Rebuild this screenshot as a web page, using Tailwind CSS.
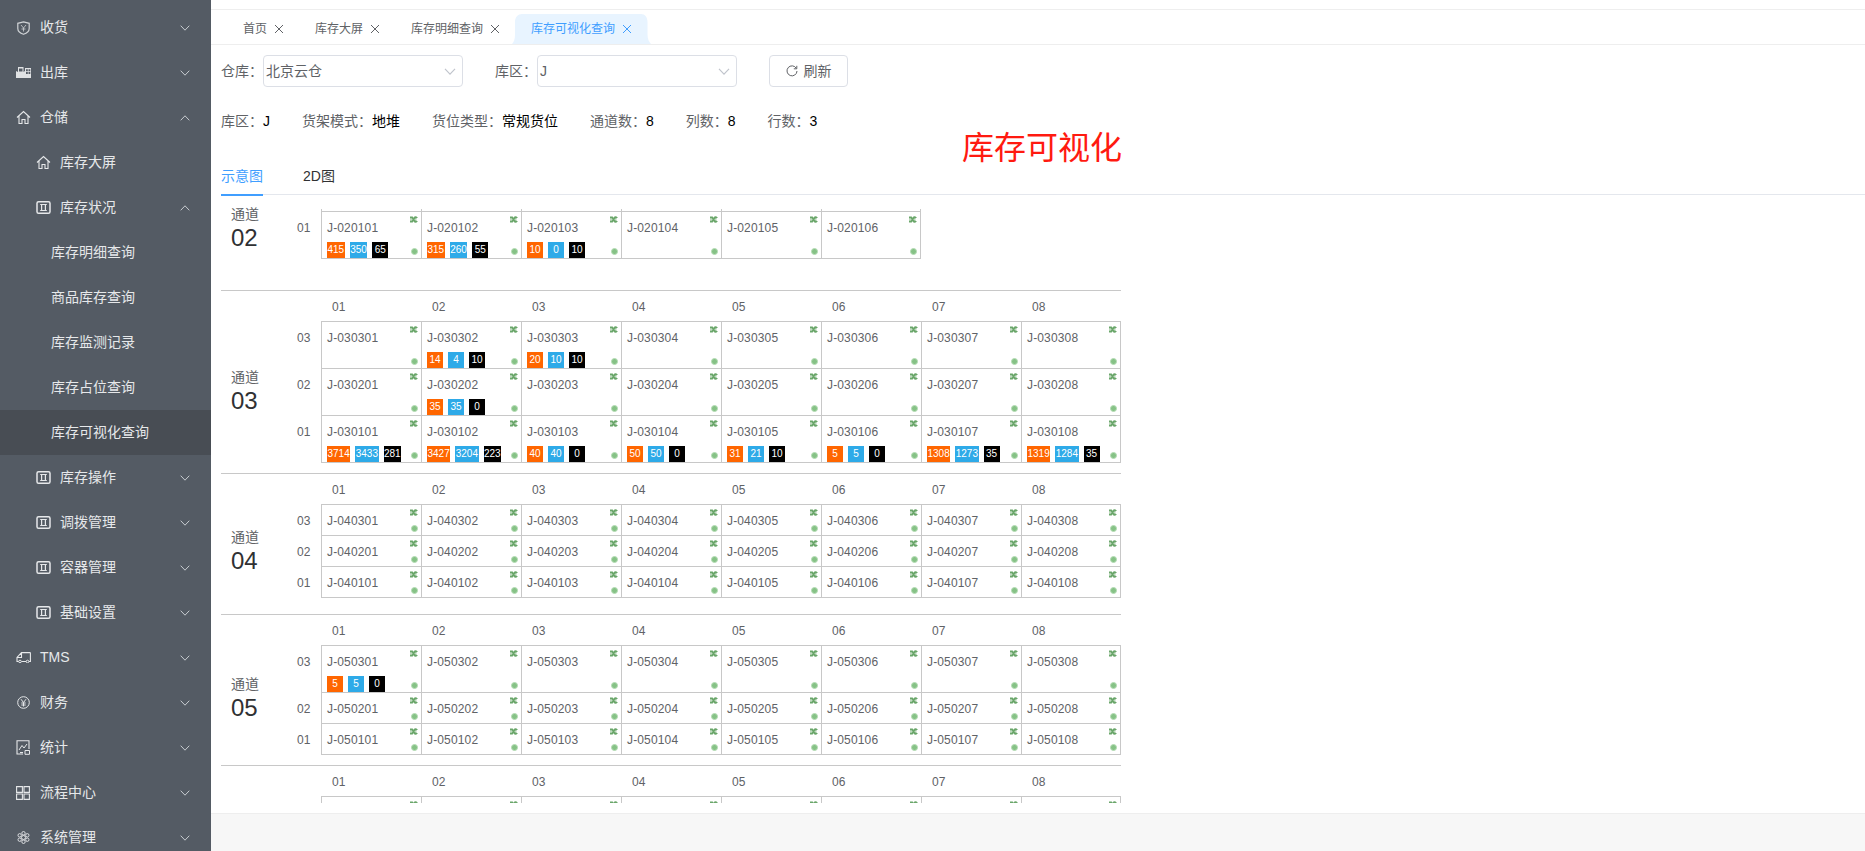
<!DOCTYPE html>
<html lang="zh-CN">
<head>
<meta charset="utf-8">
<title>库存可视化查询</title>
<script src="https://cdn.jsdelivr.net/npm/@tailwindcss/browser@4"></script>
</head>
<body class="m-0 h-[851px] w-[1865px] overflow-hidden bg-white text-[14px] text-[#606266] font-['Liberation_Sans','Noto_Sans_CJK_SC',sans-serif]">
<svg class="hidden">
  <symbol id="chev" viewBox="0 0 10 6"><path d="M.7.7 5 5.2 9.3.7" fill="none" stroke="currentColor" stroke-width="1"/></symbol>
  <symbol id="home" viewBox="0 0 15 15"><path d="M1 7.5 7.5 1.5 14 7.5M3 6v7.5h3V9.5h3v4h3V6" fill="none" stroke="currentColor" stroke-width="1.1"/></symbol>
  <symbol id="box" viewBox="0 0 15 15"><rect x="1" y="1.7" width="13" height="11.6" rx="1.6" fill="none" stroke="currentColor" stroke-width="1.5"/><path d="M5.6 4.5v6M9.4 4.5v6M4.2 4.5h6.6M4.2 10.5h6.6" fill="none" stroke="currentColor" stroke-width="1.2"/></symbol>
  <symbol id="shuffle" viewBox="0 0 8 7"><rect x="0" y="2" width="6.500" height="3" fill="#74ad74" fill-opacity=".45"/><path d="M0 1.300h2.200l2.600 4.400h1.400M0 5.700h2.200l2.600-4.400h1.400" fill="none" stroke="#6aa66a" stroke-width="1.800"/><path d="M5.500 0 8 1.400 5.500 2.800zM5.500 4.200 8 5.600 5.500 7z" fill="#6aa66a"/></symbol>
  <symbol id="close" viewBox="0 0 9 9"><path d="M.5.5l8 8M8.500.5l-8 8" fill="none" stroke="currentColor" stroke-width="1"/></symbol>
</svg>
<div class="flex h-full w-full">
  <aside class="h-full w-[211px] shrink-0 overflow-hidden bg-[#545b64] pt-[5px] text-[#e6e8ea]">
    <div class="flex h-[45px] items-center"><svg class="ml-[17px] h-[14px] w-[13px] shrink-0 text-[#d0d3d6]" viewBox="0 0 13 14"><path d="M6.500.8 12.200 2.300V7.500C12.200 10.300 9.500 12.300 6.500 13.300 3.500 12.300.8 10.300.8 7.500V2.300Z" fill="none" stroke="currentColor" stroke-width="1.200"/><path d="M4 4 6.500 7 9 4M6.500 7v3.500M4.500 8h4" fill="none" stroke="currentColor" stroke-width=".8"/></svg><span class="ml-[10px] flex-1">收货</span><svg class="mr-[21px] h-[6px] w-[10px] text-[#c8ccd0]"><use href="#chev"/></svg></div>
    <div class="flex h-[45px] items-center"><svg class="ml-[16px] h-[11px] w-[15px] shrink-0 text-[#e0e2e4]" viewBox="0 0 15 11"><path d="M0 11V4l2 1V0h5.500v5L9 4V1h6v10Z" fill="currentColor"/><path d="M3 1.500h3.500v3H3zM10 2.200h1.800v2H10zM12.500 2.200h1.800v2h-1.800zM10 5h1.800v2H10zM12.500 5h1.800v2h-1.800z" fill="#545b64"/></svg><span class="ml-[9px] flex-1">出库</span><svg class="mr-[21px] h-[6px] w-[10px] text-[#c8ccd0]"><use href="#chev"/></svg></div>
    <div class="flex h-[45px] items-center"><svg class="ml-[16px] h-[15px] w-[15px] shrink-0"><use href="#home"/></svg><span class="ml-[9px] flex-1">仓储</span><svg class="mr-[21px] h-[6px] w-[10px] rotate-180 text-[#c8ccd0]"><use href="#chev"/></svg></div>
    <div class="flex h-[45px] items-center"><svg class="ml-[36px] h-[15px] w-[15px] shrink-0"><use href="#home"/></svg><span class="ml-[9px] flex-1">库存大屏</span></div>
    <div class="flex h-[45px] items-center"><svg class="ml-[36px] h-[15px] w-[15px] shrink-0"><use href="#box"/></svg><span class="ml-[9px] flex-1">库存状况</span><svg class="mr-[21px] h-[6px] w-[10px] rotate-180 text-[#c8ccd0]"><use href="#chev"/></svg></div>
    <div class="flex h-[45px] items-center pl-[51px]">库存明细查询</div>
    <div class="flex h-[45px] items-center pl-[51px]">商品库存查询</div>
    <div class="flex h-[45px] items-center pl-[51px]">库存监测记录</div>
    <div class="flex h-[45px] items-center pl-[51px]">库存占位查询</div>
    <div class="flex h-[45px] items-center bg-[#484d54] pl-[51px]">库存可视化查询</div>
    <div class="flex h-[45px] items-center"><svg class="ml-[36px] h-[15px] w-[15px] shrink-0"><use href="#box"/></svg><span class="ml-[9px] flex-1">库存操作</span><svg class="mr-[21px] h-[6px] w-[10px] text-[#c8ccd0]"><use href="#chev"/></svg></div>
    <div class="flex h-[45px] items-center"><svg class="ml-[36px] h-[15px] w-[15px] shrink-0"><use href="#box"/></svg><span class="ml-[9px] flex-1">调拨管理</span><svg class="mr-[21px] h-[6px] w-[10px] text-[#c8ccd0]"><use href="#chev"/></svg></div>
    <div class="flex h-[45px] items-center"><svg class="ml-[36px] h-[15px] w-[15px] shrink-0"><use href="#box"/></svg><span class="ml-[9px] flex-1">容器管理</span><svg class="mr-[21px] h-[6px] w-[10px] text-[#c8ccd0]"><use href="#chev"/></svg></div>
    <div class="flex h-[45px] items-center"><svg class="ml-[36px] h-[15px] w-[15px] shrink-0"><use href="#box"/></svg><span class="ml-[9px] flex-1">基础设置</span><svg class="mr-[21px] h-[6px] w-[10px] text-[#c8ccd0]"><use href="#chev"/></svg></div>
    <div class="flex h-[45px] items-center"><svg class="ml-[16px] h-[11px] w-[15px] shrink-0" viewBox="0 0 15 11"><path d="M14.400.6H5.500L1 5.500V9.500h1.600M5.500 9.500h4.500M13 9.500h1.400V.6M5.500.6V5.500H1" fill="none" stroke="currentColor" stroke-width="1.100"/><circle cx="4" cy="9.500" r="1.300" fill="none" stroke="currentColor"/><circle cx="11.500" cy="9.500" r="1.300" fill="none" stroke="currentColor"/></svg><span class="ml-[9px] flex-1">TMS</span><svg class="mr-[21px] h-[6px] w-[10px] text-[#c8ccd0]"><use href="#chev"/></svg></div>
    <div class="flex h-[45px] items-center"><svg class="ml-[17px] h-[13px] w-[13px] shrink-0" viewBox="0 0 13 13"><circle cx="6.500" cy="6.500" r="5.800" fill="none" stroke="currentColor" stroke-width="1"/><path d="M4 3.200 6.500 6.500 9 3.200M6.500 6.500v4M4.300 7h4.400M4.300 9h4.400" fill="none" stroke="currentColor" stroke-width="1"/></svg><span class="ml-[10px] flex-1">财务</span><svg class="mr-[21px] h-[6px] w-[10px] text-[#c8ccd0]"><use href="#chev"/></svg></div>
    <div class="flex h-[45px] items-center"><svg class="ml-[16px] h-[15px] w-[14px] shrink-0" viewBox="0 0 14 15"><path d="M13 9V.8H1V14h6" fill="none" stroke="currentColor" stroke-width="1.100"/><path d="M3 10 6 5.500 8 8l3-4" fill="none" stroke="currentColor" stroke-width="1"/><path d="M9 14.300h4.500V10.500H9ZM4 12.500h3" fill="none" stroke="currentColor" stroke-width="1"/></svg><span class="ml-[10px] flex-1">统计</span><svg class="mr-[21px] h-[6px] w-[10px] text-[#c8ccd0]"><use href="#chev"/></svg></div>
    <div class="flex h-[45px] items-center"><svg class="ml-[16px] h-[14px] w-[14px] shrink-0" viewBox="0 0 14 14"><path d="M.6.600h5.800v5.800H.6zM8 .600h5.400v5.800H8zM.6 8h5.800v5.400H.6zM8 8h5.400v5.400H8z" fill="none" stroke="currentColor" stroke-width="1.100"/></svg><span class="ml-[10px] flex-1">流程中心</span><svg class="mr-[21px] h-[6px] w-[10px] text-[#c8ccd0]"><use href="#chev"/></svg></div>
    <div class="flex h-[45px] items-center"><svg class="ml-[17px] h-[13px] w-[13px] shrink-0" viewBox="0 0 13 13"><circle cx="6.500" cy="6.500" r="2" fill="none" stroke="currentColor"/><circle cx="6.500" cy="2.200" r="1.700" fill="none" stroke="currentColor" stroke-width=".9"/><circle cx="6.500" cy="10.800" r="1.700" fill="none" stroke="currentColor" stroke-width=".9"/><circle cx="2.700" cy="4.300" r="1.700" fill="none" stroke="currentColor" stroke-width=".9"/><circle cx="10.300" cy="4.300" r="1.700" fill="none" stroke="currentColor" stroke-width=".9"/><circle cx="2.700" cy="8.700" r="1.700" fill="none" stroke="currentColor" stroke-width=".9"/><circle cx="10.300" cy="8.700" r="1.700" fill="none" stroke="currentColor" stroke-width=".9"/></svg><span class="ml-[10px] flex-1">系统管理</span><svg class="mr-[21px] h-[6px] w-[10px] text-[#c8ccd0]"><use href="#chev"/></svg></div>
  </aside>

  <main class="flex h-full min-w-0 flex-1 flex-col">
    <div class="h-[10px] shrink-0 border-b border-[#eeeeee]"></div>
    <nav class="flex h-[35px] shrink-0 items-end border-b border-[#eeeeee] pl-[17px] text-[12px]">
      <div class="flex h-[30px] items-center gap-[6px] px-[15px]"><span>首页</span><svg class="h-[12px] w-[12px] p-[1.5px]"><use href="#close"/></svg></div>
      <div class="flex h-[30px] items-center gap-[6px] px-[15px]"><span>库存大屏</span><svg class="h-[12px] w-[12px] p-[1.5px]"><use href="#close"/></svg></div>
      <div class="flex h-[30px] items-center gap-[6px] px-[15px]"><span>库存明细查询</span><svg class="h-[12px] w-[12px] p-[1.5px]"><use href="#close"/></svg></div>
      <div class="relative flex h-[30px] items-center gap-[6px] px-[15px] text-[#409eff]">
        <svg class="absolute -left-[4px] top-0 h-[30px] w-[139px]" viewBox="0 0 139 30"><path d="M0 30C2 28 3 25 3 20V8C3 3 6 0 10 0H129C133 0 135.500 3 135.500 8V20C135.500 25 137 28 139 30Z" fill="#e8f4ff"/></svg>
        <span class="relative">库存可视化查询</span><svg class="relative h-[12px] w-[12px] p-[1.5px]"><use href="#close"/></svg>
      </div>
    </nav>

    <div class="flex h-[42px] shrink-0 items-end pl-[10px]">
      <label class="flex items-center"><span class="w-[42px]">仓库：</span>
        <div class="flex h-[32px] w-[200px] items-center justify-between rounded-[4px] border border-[#dcdfe6] pl-[2px] pr-[6px]"><span>北京云仓</span><svg class="h-[7px] w-[12px] text-[#c0c4cc]"><use href="#chev"/></svg></div>
      </label>
      <label class="ml-[32px] flex items-center"><span class="w-[42px]">库区：</span>
        <div class="flex h-[32px] w-[200px] items-center justify-between rounded-[4px] border border-[#dcdfe6] pl-[2px] pr-[6px]"><span>J</span><svg class="h-[7px] w-[12px] text-[#c0c4cc]"><use href="#chev"/></svg></div>
      </label>
      <button class="ml-[32px] flex h-[32px] w-[79px] items-center justify-center gap-[6px] rounded-[4px] border border-[#dcdfe6] bg-white text-[#606266]">
        <svg class="h-[12px] w-[12px]" viewBox="0 0 12 12"><path d="M10.300 3.300A5 5 0 1 0 11 6" fill="none" stroke="currentColor" stroke-width="1"/><path d="M10.800.8v3h-3" fill="none" stroke="currentColor" stroke-width="1"/></svg><span>刷新</span>
      </button>
    </div>

    <div class="mt-[24px] flex h-[20px] shrink-0 items-center gap-[32px] pl-[10px] leading-[20px]">
      <div>库区：<span class="text-black">J</span></div>
      <div>货架模式：<span class="text-black">地堆</span></div>
      <div>货位类型：<span class="text-black">常规货位</span></div>
      <div>通道数：<span class="text-black">8</span></div>
      <div>列数：<span class="text-black">8</span></div>
      <div>行数：<span class="text-black">3</span></div>
    </div>

    <div class="-mt-[1px] h-[36px] shrink-0 pl-[8px] text-center text-[32px] leading-[36px] text-[#ff1a10]">库存可视化</div>

    <div class="ml-[10px] flex h-[29px] shrink-0 gap-[40px] border-b border-[#e4e7ed] text-[14px] leading-[20px] text-[#303133]">
      <div class="relative h-[29px] text-[#409eff]">示意图<span class="absolute -bottom-[1px] left-0 h-[2px] w-full bg-[#409eff]"></span></div>
      <div>2D图</div>
    </div>

    <div id="store" class="ml-[10px] h-[608px] shrink-0 overflow-hidden"></div>
    <div class="flex-1"></div>
    <footer class="h-[38px] shrink-0 border-t border-[#eeeeee] bg-[#f7f7f7]"></footer>
  </main>
</div>

<script>
const badgeData = {
  '020101':[415,350,65],'020102':[315,260,55],'020103':[10,0,10],
  '030302':[14,4,10],'030303':[20,10,10],'030202':[35,35,0],
  '030101':[3714,3433,281],'030102':[3427,3204,223],'030103':[40,40,0],'030104':[50,50,0],
  '030105':[31,21,10],'030106':[5,5,0],'030107':[1308,1273,35],'030108':[1319,1284,35],
  '050301':[5,5,0]
};
const pad = n => String(n).padStart(2,'0');
const badge = (v,c) => `<span class="${c} h-[16px] min-w-[16px] px-[0.5px] text-center text-[10px] leading-[16px] text-white">${v}</span>`;
const marks = `<svg class="absolute right-[3px] top-[4px] h-[7px] w-[8px]"><use href="#shuffle"/></svg>
    <span class="absolute bottom-[3px] right-[3px] h-[7px] w-[7px] rounded-full border border-[#b5dcb5] bg-[#86c286]"></span>`;
function cell(a,r,c,last){
  const id = pad(a)+pad(r)+pad(c), b = badgeData[id];
  const bs = b ? `<div class="mt-[6px] flex gap-[5px]">${badge(b[0],'bg-[#ff6600]')}${badge(b[1],'bg-[#2eaae8]')}${badge(b[2],'bg-black')}</div>` : `<div class="h-[6px]"></div>`;
  return `<div class="relative w-[100px] shrink-0 border-l border-t border-[#c8c8c8] ${last?'border-r':''} pl-[5px] pt-[8px]">
    <div class="text-[12px] leading-[16px] tracking-[0.15px]">J-${id}</div>${bs}${marks}
  </div>`;
}
const head = cols => {
  let h = `<div class="flex h-[30px] pl-[24px] pt-[8px] text-[12px] leading-[16px]">`;
  for(let c=1;c<=cols;c++) h+=`<div class="w-[100px] shrink-0 pl-[11px]">${pad(c)}</div>`;
  return h+`</div>`;
};
function section(a,rows,cols,opts){
  let h='';
  if(opts.head) h+=head(cols);
  else {
    h+=`<div class="flex h-[2px] pl-[24px]">`;
    for(let c=1;c<=cols;c++) h+=`<div class="h-[2px] w-[100px] shrink-0 border-l border-[#c8c8c8] ${c==cols?'border-r':''}"></div>`;
    h+=`</div>`;
  }
  for(let r=rows;r>=1;r--){
    h+=`<div class="flex"><div class="w-[24px] shrink-0 pt-[9px] text-[12px] leading-[16px]">${pad(r)}</div>`;
    for(let c=1;c<=cols;c++) h+=cell(a,r,c,c==cols);
    h+=`</div>`;
  }
  h+=`<div class="ml-[24px] border-t border-[#c8c8c8]" style="width:${cols*100}px"></div>`;
  return `<section class="flex w-[900px] border-b border-[#c8c8c8] ${opts.cls}">
    <div class="w-[76px] shrink-0 pl-[10px] ${opts.lab}"><div class="leading-[20px]">通道</div><div class="mt-[1px] text-[24px] leading-[26px] text-[#303133]">${pad(a)}</div></div>
    <div>${h}</div></section>`;
}
/* the next aisle only shows its column headers and the top edge of its first row */
function clipped(cols){
  let row = `<div class="flex pl-[24px]">`;
  for(let c=1;c<=cols;c++) row+=`<div class="relative h-[47px] w-[100px] shrink-0 border-l border-t border-[#c8c8c8] ${c==cols?'border-r':''}">${marks}</div>`;
  return `<section class="flex w-[900px]"><div class="w-[76px] shrink-0"></div><div>${head(cols)}${row}</div></div></section>`;
}
document.getElementById('store').innerHTML =
  section(2,1,6,{head:false,cls:'pt-[14px] pb-[31px]',lab:'-mt-[5px] self-start'}) +
  section(3,3,8,{head:true,cls:'pb-[10px]',lab:'mt-[26px] self-center'}) +
  section(4,3,8,{head:true,cls:'pb-[16px]',lab:'mt-[28px] self-center'}) +
  section(5,3,8,{head:true,cls:'pb-[10px]',lab:'mt-[24px] self-center'}) +
  clipped(8);
</script>
</body>
</html>
